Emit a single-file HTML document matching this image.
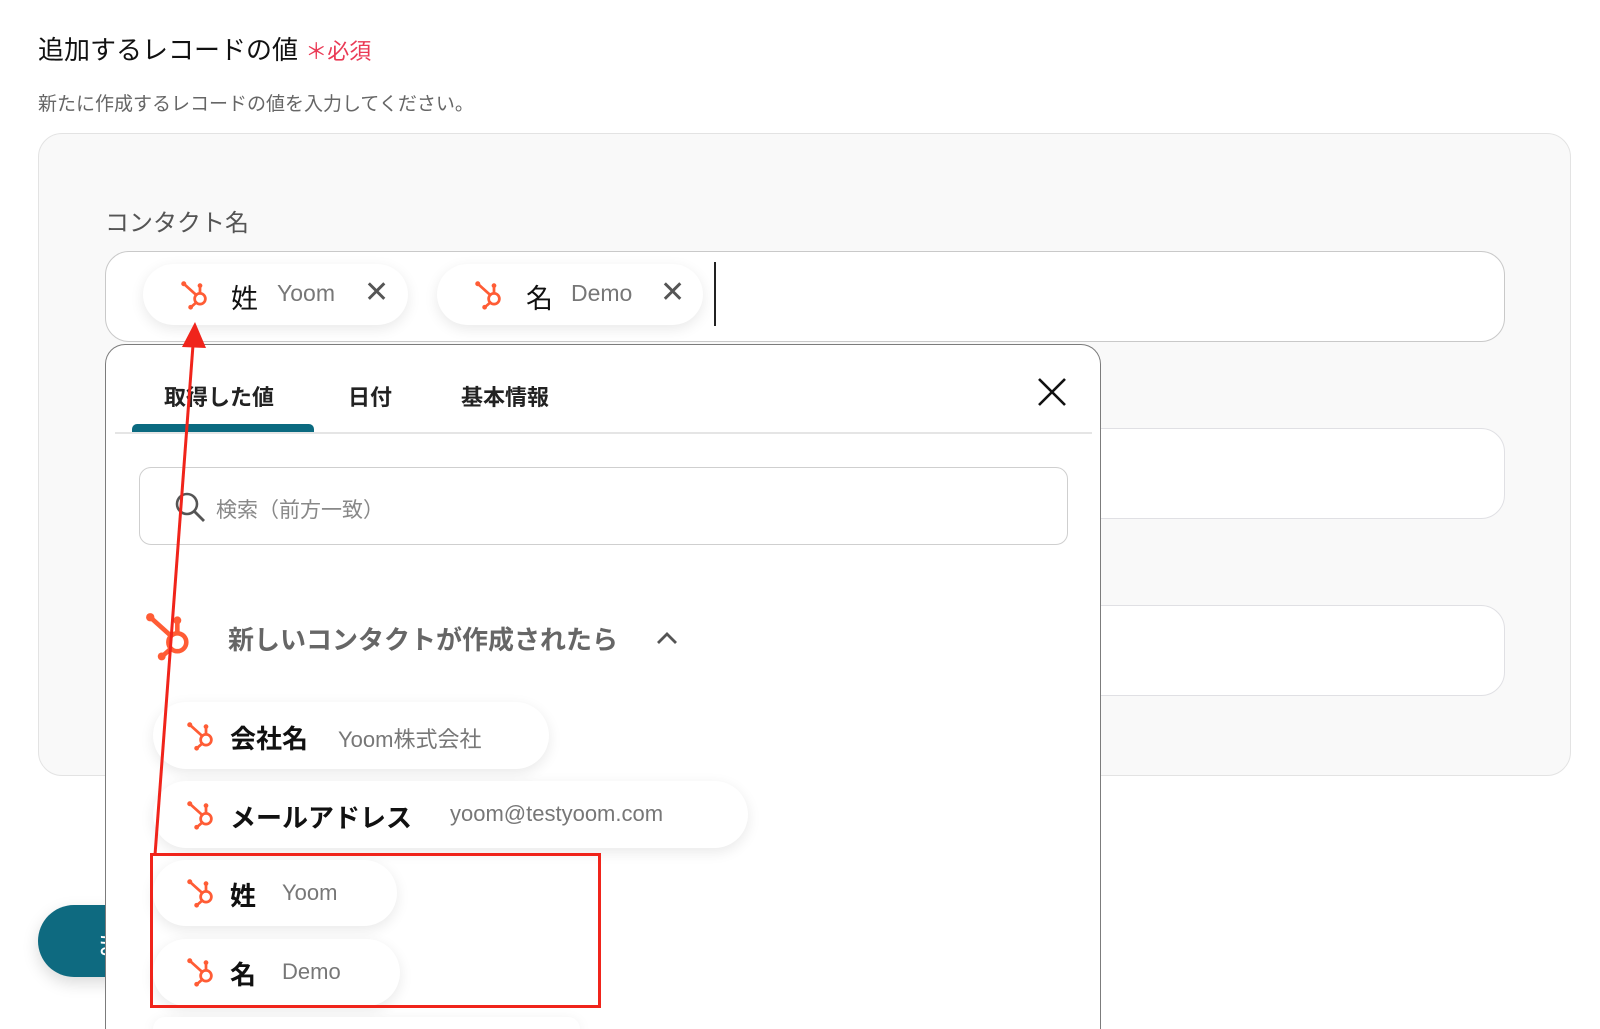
<!DOCTYPE html>
<html><head><meta charset="utf-8">
<style>
*{box-sizing:border-box;margin:0;padding:0}
html,body{width:1600px;height:1029px;overflow:hidden}
body{background:#fff;font-family:"Liberation Sans","Noto Sans CJK JP",sans-serif;color:#222}
#w{position:relative;width:1600px;height:1029px;overflow:hidden}
.a{position:absolute}
.pill{position:absolute;background:#fff;border-radius:34px;box-shadow:0 4px 14px rgba(0,0,0,.09)}
.hs{position:absolute;width:30px;height:30px}
.lb{position:absolute;font-weight:700;color:#111;white-space:nowrap}
.val{position:absolute;color:#777;white-space:nowrap}
</style></head><body><div id="w">
<svg width="0" height="0" style="position:absolute"><defs>
<g id="hsi"><g stroke="#ff5c35" stroke-width="2.2" fill="none" stroke-linecap="round"><circle cx="16" cy="15" r="4.3"/><line x1="3" y1="3" x2="13" y2="12"/><line x1="16" y1="10.5" x2="16" y2="5"/><line x1="13" y1="18" x2="9" y2="21.5"/></g><g fill="#ff5c35"><circle cx="3" cy="3" r="2"/><circle cx="16" cy="4.5" r="1.9"/><circle cx="8.5" cy="21.8" r="1.9"/></g></g>
</defs></svg>

<div class="a" style="left:38px;top:30px;font-size:26px;color:#111">追加するレコードの値 <span style="color:#ea3a55;font-size:22px">＊必須</span></div>
<div class="a" style="left:38px;top:89px;font-size:19px;color:#666">新たに作成するレコードの値を入力してください。</div>

<div class="a" style="left:38px;top:133px;width:1533px;height:643px;background:#f9f9f9;border:1.5px solid #e3e3e3;border-radius:24px"></div>
<div class="a" style="left:105px;top:203px;font-size:24px;color:#555">コンタクト名</div>
<div class="a" style="left:105px;top:251px;width:1400px;height:91px;background:#fff;border:1.5px solid #c9c9c9;border-radius:24px"></div>
<div class="a" style="left:105px;top:428px;width:1400px;height:91px;background:#fff;border:1.5px solid #e0e0e4;border-radius:24px"></div>
<div class="a" style="left:105px;top:605px;width:1400px;height:91px;background:#fff;border:1.5px solid #e0e0e4;border-radius:24px"></div>

<div class="pill" style="left:143px;top:264px;width:265px;height:61px"></div>
<svg class="hs" style="left:180px;top:280px" viewBox="0 0 24 24"><use href="#hsi"/></svg>
<div class="a" style="left:231px;top:277px;font-size:27px;color:#111">姓</div>
<div class="a" style="left:277px;top:280px;font-size:23px;color:#777">Yoom</div>
<div class="a" style="left:364px;top:278px;font-size:30px;color:#555;line-height:30px">✕</div>
<div class="pill" style="left:437px;top:264px;width:266px;height:61px"></div>
<svg class="hs" style="left:474px;top:280px" viewBox="0 0 24 24"><use href="#hsi"/></svg>
<div class="a" style="left:526px;top:277px;font-size:27px;color:#111">名</div>
<div class="a" style="left:571px;top:280px;font-size:23px;color:#777">Demo</div>
<div class="a" style="left:660px;top:278px;font-size:30px;color:#555;line-height:30px">✕</div>
<div class="a" style="left:714px;top:262px;width:2px;height:64px;background:#222"></div>

<div class="a" style="left:38px;top:905px;width:120px;height:72px;background:#0e6a80;border-radius:36px;box-shadow:0 6px 16px rgba(0,0,0,.15)"></div>
<div class="a" style="left:96px;top:925px;font-size:26px;color:#fff">ま</div>

<div class="a" style="left:105px;top:344px;width:996px;height:685px;background:#fff;border:1.5px solid #7c7c7c;border-bottom:none;border-radius:20px 20px 0 0"></div>
<div class="a" style="left:164px;top:380px;font-size:22px;font-weight:700;color:#222">取得した値</div>
<div class="a" style="left:348px;top:380px;font-size:22px;font-weight:700;color:#222">日付</div>
<div class="a" style="left:461px;top:380px;font-size:22px;font-weight:700;color:#222">基本情報</div>
<div class="a" style="left:132px;top:424px;width:182px;height:8px;background:#0b6a80;border-radius:5px 5px 0 0"></div>
<div class="a" style="left:115px;top:432px;width:977px;height:2px;background:#e5e5e5"></div>
<svg class="a" style="left:1036px;top:376px" width="32" height="32" viewBox="0 0 32 32"><path d="M3 3L29 29M29 3L3 29" stroke="#111" stroke-width="2.6"/></svg>

<div class="a" style="left:139px;top:467px;width:929px;height:78px;border:1.5px solid #cfcfcf;border-radius:12px"></div>
<svg class="a" style="left:173px;top:490px" width="34" height="34" viewBox="0 0 34 34"><circle cx="14" cy="14" r="10" stroke="#555" stroke-width="2.6" fill="none"/><path d="M21 21L31 31" stroke="#555" stroke-width="2.8"/></svg>
<div class="a" style="left:216px;top:494px;font-size:21px;color:#888">検索（前方一致）</div>

<svg class="a" style="left:144px;top:611px" width="50" height="50" viewBox="0 0 24 24"><use href="#hsi"/></svg>
<div class="a" style="left:228px;top:620px;font-size:26px;font-weight:700;color:#666">新しいコンタクトが作成されたら</div>
<svg class="a" style="left:655px;top:630px" width="24" height="16" viewBox="0 0 24 16"><path d="M3 13L12 4L21 13" stroke="#555" stroke-width="2.8" fill="none"/></svg>

<div class="pill" style="left:153px;top:702px;width:396px;height:67px"></div>
<svg class="hs" style="left:186px;top:721px" viewBox="0 0 24 24"><use href="#hsi"/></svg>
<div class="lb" style="left:230px;top:719px;font-size:26px">会社名</div>
<div class="val" style="left:338px;top:722px;font-size:22px">Yoom株式会社</div>

<div class="pill" style="left:153px;top:781px;width:595px;height:67px"></div>
<svg class="hs" style="left:186px;top:800px" viewBox="0 0 24 24"><use href="#hsi"/></svg>
<div class="lb" style="left:230px;top:798px;font-size:26px">メールアドレス</div>
<div class="val" style="left:450px;top:801px;font-size:22px">yoom@testyoom.com</div>

<div class="pill" style="left:153px;top:860px;width:244px;height:66px"></div>
<svg class="hs" style="left:186px;top:878px" viewBox="0 0 24 24"><use href="#hsi"/></svg>
<div class="lb" style="left:230px;top:876px;font-size:26px">姓</div>
<div class="val" style="left:282px;top:880px;font-size:22px">Yoom</div>

<div class="pill" style="left:153px;top:939px;width:247px;height:67px"></div>
<svg class="hs" style="left:186px;top:957px" viewBox="0 0 24 24"><use href="#hsi"/></svg>
<div class="lb" style="left:230px;top:955px;font-size:26px">名</div>
<div class="val" style="left:282px;top:959px;font-size:22px">Demo</div>

<div class="pill" style="left:153px;top:1017px;width:427px;height:12px;border-radius:20px 20px 0 0"></div>

<div class="a" style="left:150px;top:853px;width:451px;height:155px;border:3px solid #f0241b"></div>
<svg class="a" style="left:0;top:0" width="1600" height="1029"><line x1="155" y1="855" x2="193" y2="345" stroke="#f0241b" stroke-width="3"/><polygon points="195,322 182,347 206,348" fill="#f0241b"/></svg>
</div></body></html>
